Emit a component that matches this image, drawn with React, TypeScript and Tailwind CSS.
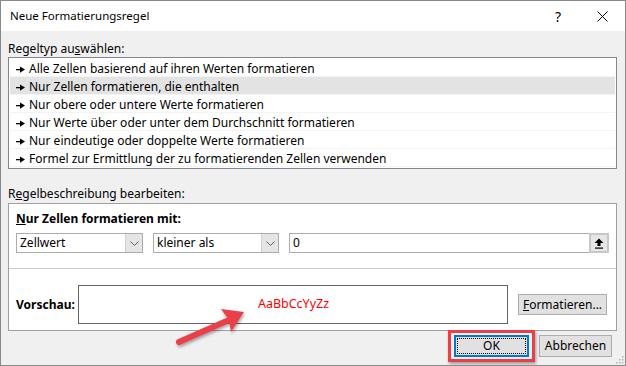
import React from "react";

const rules = [
  "Alle Zellen basierend auf ihren Werten formatieren",
  "Nur Zellen formatieren, die enthalten",
  "Nur obere oder untere Werte formatieren",
  "Nur Werte über oder unter dem Durchschnitt formatieren",
  "Nur eindeutige oder doppelte Werte formatieren",
  "Formel zur Ermittlung der zu formatierenden Zellen verwenden",
];

function Bullet() {
  return (
    <svg width="9" height="7" viewBox="0 0 9 7" className="shrink-0">
      <rect x="0" y="3" width="5" height="1.3" fill="#000" />
      <path d="M4 0.5 L9 3.6 L4 6.7 Z" fill="#000" />
    </svg>
  );
}

function Chevron() {
  return (
    <div className="w-[17px] h-[18px] bg-[#e5e5e5] border-l border-[#cfcfcf] flex items-center justify-center">
      <svg width="9" height="5" viewBox="0 0 9 5">
        <path d="M0.5 0.5 L4.5 4.5 L8.5 0.5" fill="none" stroke="#606060" strokeWidth="1" />
      </svg>
    </div>
  );
}

function Select({ label, width }: { label: string; width: string }) {
  return (
    <div className={`${width} h-[20px] border border-[#acacac] bg-white flex items-center`}>
      <span className="flex-1 pl-[3px] text-[12px] leading-none">{label}</span>
      <Chevron />
    </div>
  );
}

export default function App() {
  return (
    <div
      className="w-[626px] h-[366px] bg-[#f0f0f0] border border-[#8a8a8a] relative flex flex-col text-black overflow-hidden"
      style={{ fontFamily: '"Noto Sans", "Open Sans", sans-serif' }}
    >
      {/* title bar */}
      <div className="h-[30px] bg-white flex items-center pl-[9px] pr-[17px]">
        <span className="text-[11.5px] flex-1">Neue Formatierungsregel</span>
        <span className="text-[14px] mr-[36px]">?</span>
        <svg width="11" height="11" viewBox="0 0 11 11">
          <path d="M0.5 0.5 L10.5 10.5 M10.5 0.5 L0.5 10.5" stroke="#000" strokeWidth="1" />
        </svg>
      </div>

      <div className="flex flex-col px-[7px] pr-[8px]">
        <div className="text-[12px] leading-[16px] pt-[10px]">
          Regeltyp au<span className="underline">s</span>wählen:
        </div>
        {/* rule list */}
        <div className="h-[112px] bg-white border border-[#828790] px-[1px] pt-[1px] overflow-hidden">
          {rules.map((r, i) => (
            <div
              key={r}
              className={`h-[18px] flex items-center gap-[4px] pl-[6px] pt-[3px] border-b border-[#f3f3f3] ${
                i === 1 ? "bg-[#e3e3e3]" : ""
              }`}
            >
              <Bullet />
              <span className="text-[12px] leading-none">{r}</span>
            </div>
          ))}
        </div>

        <div className="text-[12px] leading-[16px] mt-[17px]">
          R<span className="underline">e</span>gelbeschreibung bearbeiten:
        </div>

        {/* description panel */}
        <div className="mt-[1px] h-[128px] bg-white border border-[#a0a0a0] flex flex-col">
          <div className="px-[7px] pt-[7px]">
            <div className="text-[12px] leading-[16px] font-bold">
              <span className="underline">N</span>ur Zellen formatieren mit:
            </div>
            <div className="flex items-center mt-[6px] gap-[10px]">
              <Select label="Zellwert" width="w-[127px]" />
              <Select label="kleiner als" width="w-[126px]" />
              <div className="w-[320px] h-[20px] border border-[#acacac] flex items-center">
                <span className="flex-1 pl-[3px] text-[12px] leading-none">0</span>
                <div className="w-[20px] h-[20px] -mr-[1px] border-2 border-[#c8c8c8] bg-[#e6e6e6] flex items-center justify-center">
                  <svg width="10" height="11" viewBox="0 0 10 11">
                    <path d="M5 0.5 L9.5 5 L6.5 5 L6.5 8 L3.5 8 L3.5 5 L0.5 5 Z" fill="#000" />
                    <rect x="1" y="9.5" width="8" height="1.2" fill="#000" />
                  </svg>
                </div>
              </div>
            </div>
          </div>
          <div className="mt-[15px] border-t border-[#c8c8c8]" />
          <div className="flex items-center px-[7px] mt-[16px]">
            <div className="w-[62px] text-[12px] font-bold">Vorschau:</div>
            <div className="w-[430px] h-[39px] border border-[#646464] flex items-center justify-center">
              <span className="text-[12.5px] text-[#ff0000] pl-[1px]">AaBbCcYyZz</span>
            </div>
            <button className="ml-[10px] w-[89px] h-[21px] bg-[#e1e1e1] border border-[#adadad] text-[12px] leading-none">
              <span className="underline">F</span>ormatieren...
            </button>
          </div>
        </div>

        {/* buttons */}
        <div className="flex justify-end gap-[10px] mt-[4px] pr-[5px]">
          <div className="relative">
            <button className="w-[75px] h-[22px] bg-[#e1e1e1] border-2 border-[#0078d7] text-[12px] leading-none flex items-center justify-center p-[1px]">
              <span className="w-full h-full border border-dotted border-black flex items-center justify-center">OK</span>
            </button>
            <div className="absolute -left-[6px] -top-[5px] w-[87px] h-[32px] border-[3px] border-[#ea3f47] shadow-[1px_2px_3px_rgba(0,0,0,0.35)]" />
          </div>
          <button className="w-[73px] h-[22px] bg-[#e1e1e1] border border-[#adadad] text-[12px] leading-none">
            Abbrechen
          </button>
        </div>
      </div>

      {/* resize grip */}
      <svg className="absolute right-[1px] bottom-[1px]" width="9" height="9" viewBox="0 0 9 9">
        {[
          [7, 1],
          [7, 4],
          [4, 4],
          [7, 7],
          [4, 7],
          [1, 7],
        ].map(([x, y]) => (
          <rect key={`${x}-${y}`} x={x} y={y} width="1.5" height="1.5" fill="#b0b0b0" />
        ))}
      </svg>

      {/* annotation arrow */}
      <svg className="absolute left-[168px] top-[300px]" width="86" height="52" viewBox="0 0 86 52">
        <defs>
          <filter id="sh" x="-20%" y="-20%" width="150%" height="160%">
            <feDropShadow dx="1" dy="2" stdDeviation="1.5" floodColor="#000" floodOpacity="0.35" />
          </filter>
        </defs>
        <g filter="url(#sh)">
          <path d="M10 41 L60 19" stroke="#ea3f47" strokeWidth="6" strokeLinecap="round" />
          <path d="M75 11 L52 8 L60 19 L62 31 Z" fill="#ea3f47" />
        </g>
      </svg>
    </div>
  );
}
